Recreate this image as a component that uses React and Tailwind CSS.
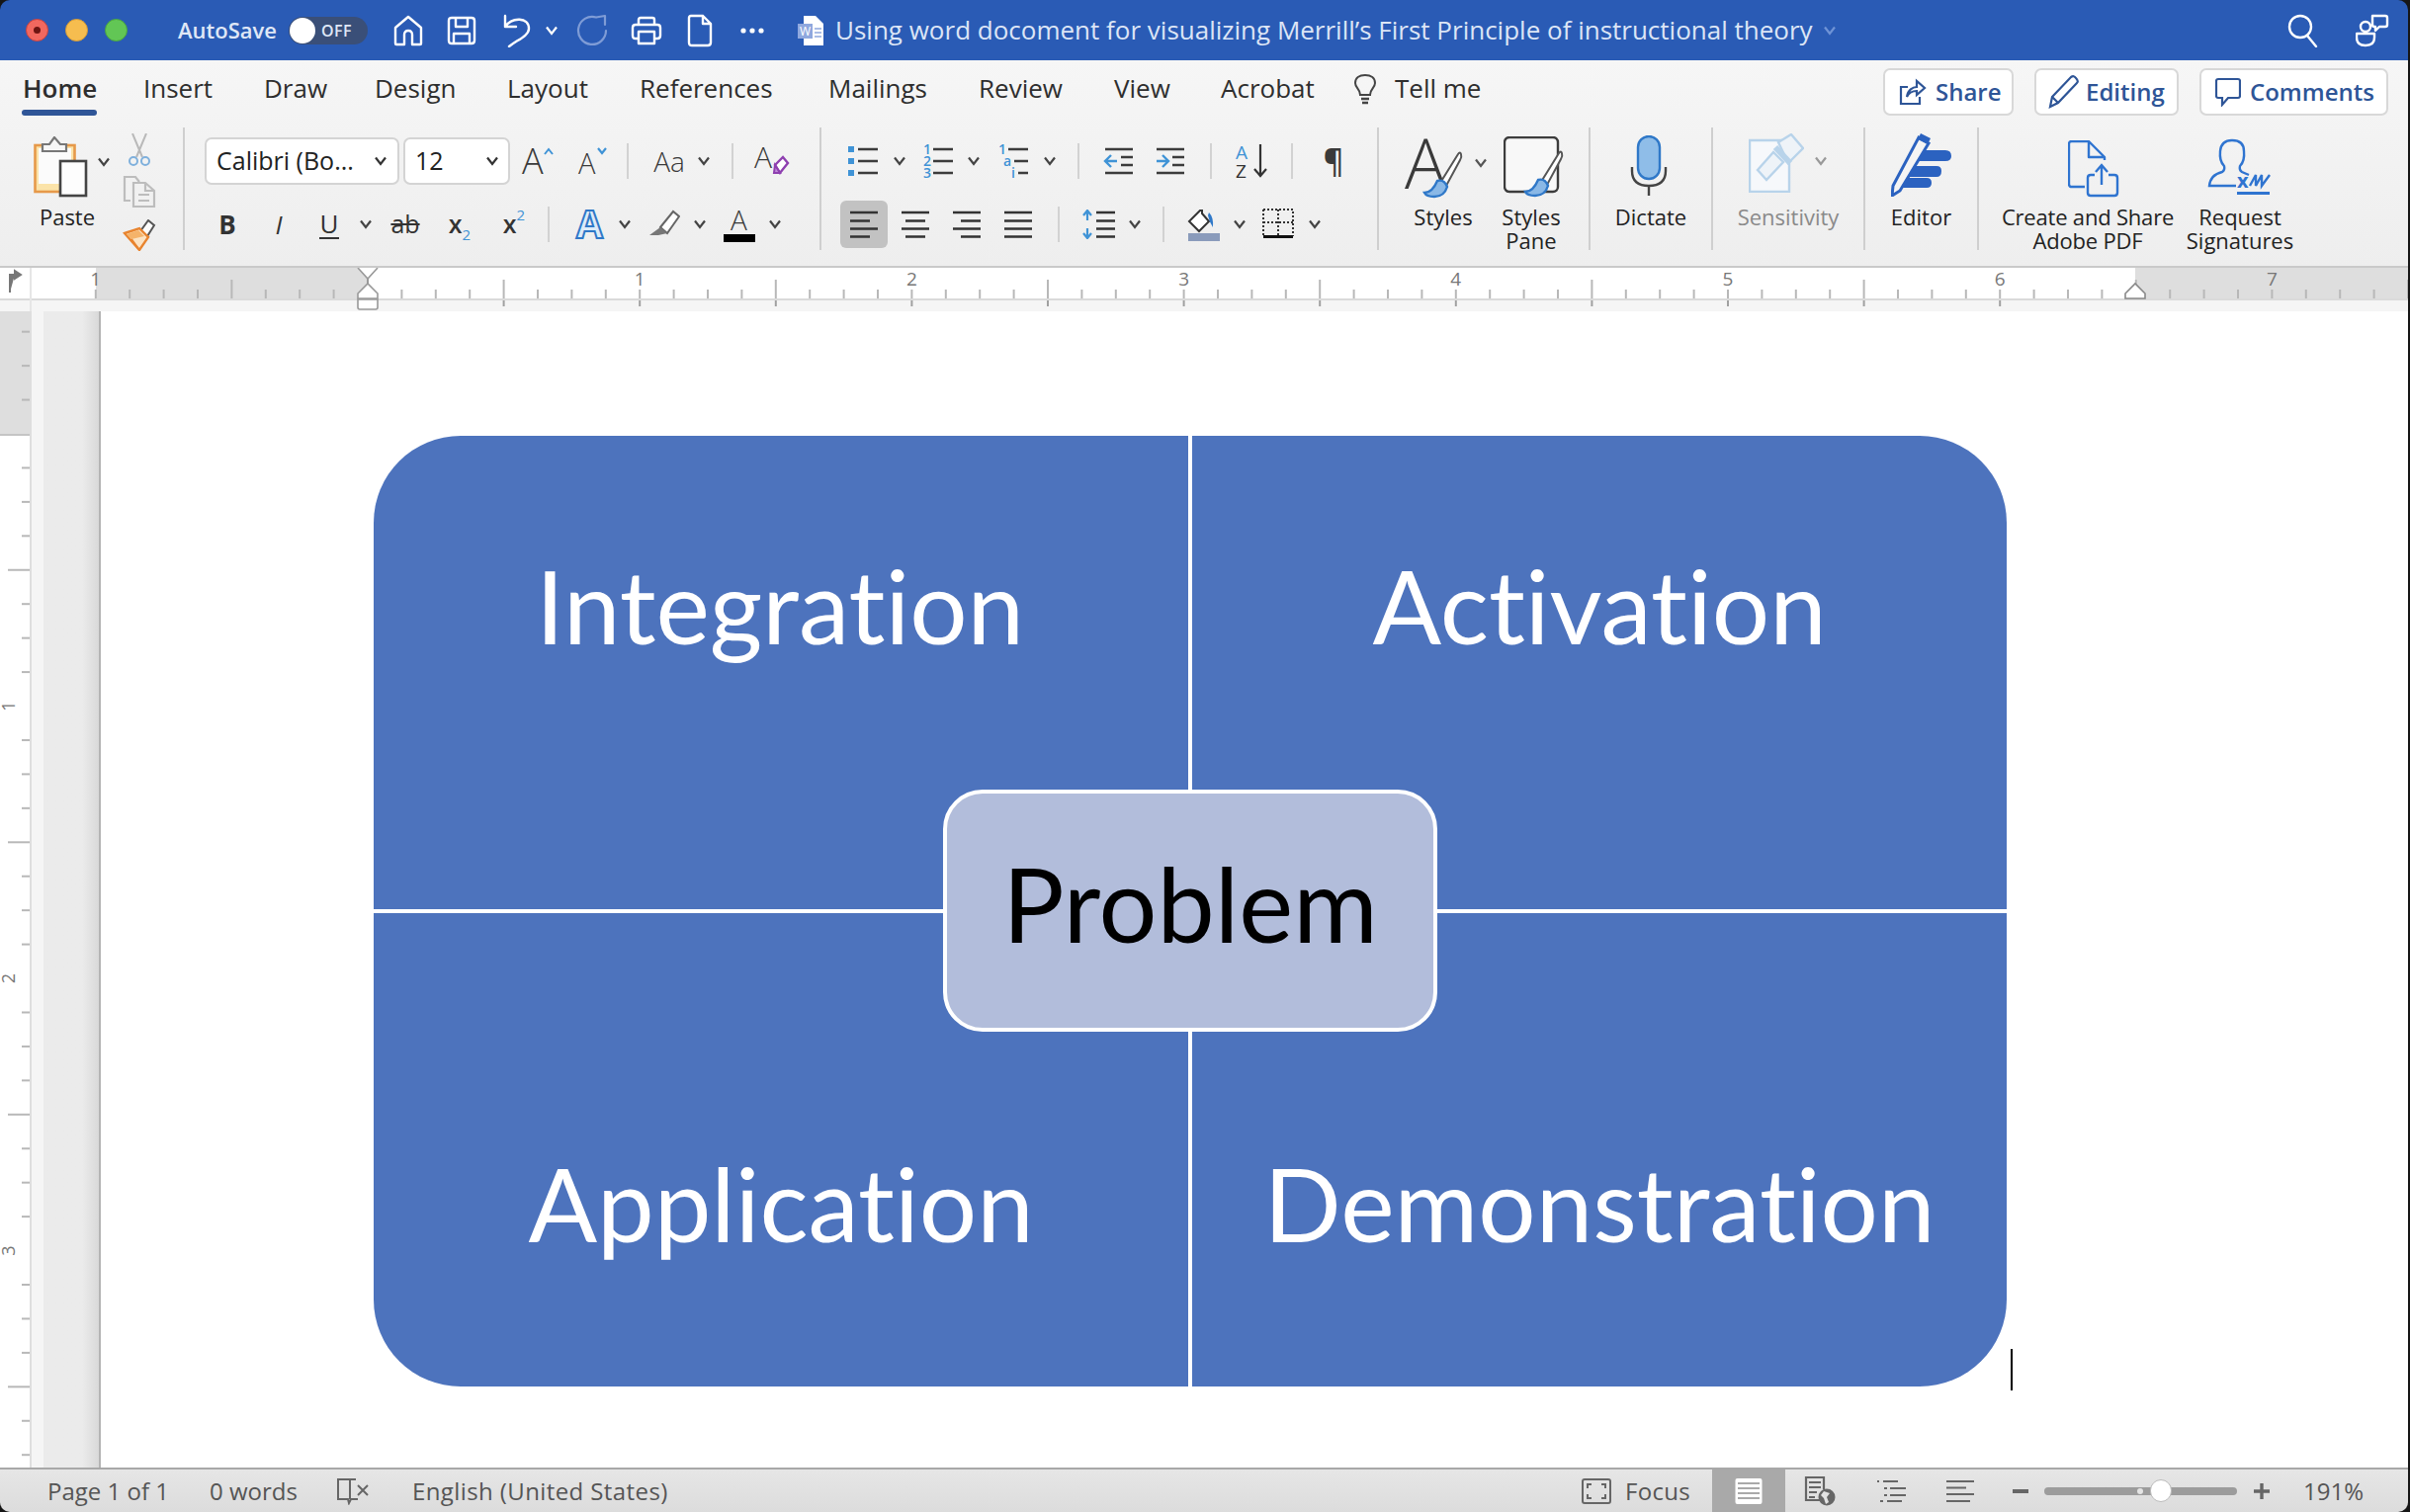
import React from "react";

const W = { fill: "none", stroke: "#fff", strokeWidth: 2.4, strokeLinejoin: "round", strokeLinecap: "round" };
const BLUE = "#3f93d6";
const UI = "'Open Sans','Noto Sans',sans-serif";

function Chev({ c = "#444", cls = "" }) {
  return (
    <svg width="14" height="10" viewBox="0 0 14 10" className={"shrink-0 " + cls}>
      <path d="M2 1.5 L7 8 L12 1.5" fill="none" stroke={c} strokeWidth="2.2" />
    </svg>
  );
}
function Sep({ cls }) {
  return <div className={"w-[2px] h-[36px] bg-[#d2d2d2] shrink-0 " + cls} />;
}
function GSep() {
  return <div className="w-[2px] h-[124px] bg-[#cfcfcf] shrink-0" />;
}
function Slot({ cls, children }) {
  return <div className={"flex items-center justify-center shrink-0 h-[48px] " + cls}>{children}</div>;
}

function Lights() {
  return (
    <div className="flex items-center gap-[17px] ml-[26px] w-[154px]">
      <div className="w-[23px] h-[23px] rounded-full bg-[#f2685f] border border-[#c8423f] flex items-center justify-center">
        <div className="w-[7px] h-[7px] rounded-full bg-[#6e1512]" />
      </div>
      <div className="w-[23px] h-[23px] rounded-full bg-[#f6bd4f] border border-[#d69b35]" />
      <div className="w-[23px] h-[23px] rounded-full bg-[#62c655] border border-[#4aa63e]" />
    </div>
  );
}

function TitleBar() {
  return (
    <div className="h-[61px] bg-[#2a5bb5] flex items-center shrink-0 text-white">
      <Lights />
      <div className="w-[112px] text-[22px] font-semibold text-[#dfe7f6] whitespace-nowrap">AutoSave</div>
      <div className="w-[80px] h-[28px] rounded-full bg-[#3a4f78] flex items-center relative shrink-0">
        <div className="w-[26px] h-[26px] rounded-full bg-white ml-[1px]" />
        <span className="ml-[6px] text-[16px] font-semibold text-[#dfe7f6] tracking-[0.5px]">OFF</span>
      </div>
      <svg width="32" height="32" viewBox="0 0 32 32" className="ml-[25px] shrink-0">
        <path {...W} d="M3 13 L16 2 L29 13 V29 Q29 30 28 30 H20 V20 Q20 16 16 16 Q12 16 12 20 V30 H4 Q3 30 3 29 Z" />
      </svg>
      <svg width="30" height="30" viewBox="0 0 30 30" className="ml-[23px] shrink-0">
        <path {...W} d="M5 2 H25 Q28 2 28 5 V25 Q28 28 25 28 H5 Q2 28 2 25 V5 Q2 2 5 2 Z M9 2 V11 H21 V2 M7 28 V18 H23 V28" />
      </svg>
      <svg width="30" height="34" viewBox="0 0 30 34" className="ml-[26px] shrink-0">
        <path {...W} d="M3 2 V13 H14 M3 13 C10 3 27 3 27 15 C27 22 16 26 7 33" />
      </svg>
      <Chev c="#fff" cls="ml-[13px]" />
      <svg width="34" height="34" viewBox="0 0 34 34" className="ml-[18px] shrink-0">
        <path fill="none" stroke="#7f9cd6" strokeWidth="2.2" strokeLinecap="round" d="M30 17 A14 14 0 1 1 20 3.5 M20 3.5 L29 2 M29 2 V11" />
      </svg>
      <svg width="32" height="30" viewBox="0 0 32 30" className="ml-[21px] shrink-0">
        <path {...W} d="M8 9 V4 Q8 2 10 2 H22 Q24 2 24 4 V9 M7 23 H5 Q2 23 2 20 V12 Q2 9 5 9 H27 Q30 9 30 12 V20 Q30 23 27 23 H25 M8 16 H24 V28 H8 Z" />
      </svg>
      <svg width="26" height="34" viewBox="0 0 26 34" className="ml-[25px] shrink-0">
        <path {...W} d="M4 2 H16 L24 10 V29 Q24 32 21 32 H5 Q2 32 2 29 V4 Q2 2 4 2 Z M16 2 V10 H24" />
      </svg>
      <svg width="24" height="8" viewBox="0 0 24 8" className="ml-[28px] shrink-0">
        <circle cx="3" cy="4" r="2.6" fill="#fff" />
        <circle cx="12" cy="4" r="2.6" fill="#fff" />
        <circle cx="21" cy="4" r="2.6" fill="#fff" />
      </svg>
      <svg width="26" height="30" viewBox="0 0 26 30" className="ml-[34px] shrink-0">
        <path fill="#fff" d="M6 0 H18 L26 8 V30 H6 Z" />
        <rect x="0" y="8" width="15" height="15" fill="#8fa8de" />
        <text x="2" y="20" fontSize="12" fill="#fff" fontFamily={UI}>W</text>
        <path stroke="#8fa8de" strokeWidth="1.5" d="M17 13 H24 M17 17 H24 M17 21 H24" />
      </svg>
      <div className="ml-[12px] mb-[2px] w-[994px] text-[26px] leading-[34px] text-[#dce5f6] whitespace-nowrap">
        Using word docoment for visualizing Merrill’s First Principle of instructional theory
      </div>
      <Chev c="#6f93d6" cls="ml-[5px]" />
      <svg width="32" height="34" viewBox="0 0 32 34" className="ml-[456px] shrink-0">
        <circle cx="13" cy="13" r="11" {...W} />
        <path {...W} d="M20 22 L29 33" />
      </svg>
      <svg width="34" height="34" viewBox="0 0 34 34" className="ml-[37px] shrink-0">
        <circle cx="10" cy="13" r="5" {...W} />
        <path {...W} d="M1 20 H19 V24 Q19 32 10 32 Q1 32 1 24 Z" />
        <path {...W} d="M17 2 H30 Q32 2 32 4 V11 Q32 13 30 13 H24 L20 17 V13 H19 Q17 13 17 11 Z" />
      </svg>
    </div>
  );
}

function Tab({ cls, children }) {
  return <div className={"shrink-0 h-[58px] pt-[10px] leading-[36px] whitespace-nowrap " + cls}>{children}</div>;
}

function ShareBtn({ cls, children }) {
  return (
    <div className={"mt-[8px] h-[48px] rounded-[7px] bg-white border-2 border-[#d8d8d8] flex items-center shrink-0 text-[#2e5597] text-[24px] font-semibold whitespace-nowrap " + cls}>
      {children}
    </div>
  );
}

function TabRow() {
  return (
    <div className="h-[68px] flex shrink-0 text-[26px] text-[#2e2e2e] pl-[23px]">
      <Tab cls="w-[122px] font-semibold">
        <div className="w-[74px]">Home</div>
        <div className="w-[76px] -ml-[1px] mt-[4px] h-[6px] rounded-full bg-[#2f5597]" />
      </Tab>
      <Tab cls="w-[122px]">Insert</Tab>
      <Tab cls="w-[112px]">Draw</Tab>
      <Tab cls="w-[134px]">Design</Tab>
      <Tab cls="w-[134px]">Layout</Tab>
      <Tab cls="w-[191px]">References</Tab>
      <Tab cls="w-[152px]">Mailings</Tab>
      <Tab cls="w-[137px]">Review</Tab>
      <Tab cls="w-[108px]">View</Tab>
      <Tab cls="w-[133px]">Acrobat</Tab>
      <svg width="26" height="32" viewBox="0 0 26 32" className="mt-[13px] shrink-0">
        <path fill="none" stroke="#444" strokeWidth="2" d="M8 22 C8 16 3 15 3 10 C3 5 7 2 13 2 C19 2 23 5 23 10 C23 15 18 16 18 22 Z" />
        <path stroke="#444" strokeWidth="2.4" d="M9 26 H17 M10 30 H16" />
      </svg>
      <Tab cls="ml-[17px] w-[494px]">Tell me</Tab>
      <ShareBtn cls="w-[132px] pl-[14px]">
        <svg width="28" height="28" viewBox="0 0 28 28" className="mr-[9px] shrink-0">
          <path fill="none" stroke="#2e5597" strokeWidth="2.2" d="M9 9 H2 V26 H21 V19 M8 19 C9 12 14 9 18 9 V3 L26 10 L18 17 V13 C14 13 10 15 8 19 Z" />
        </svg>
        Share
      </ShareBtn>
      <ShareBtn cls="ml-[21px] w-[146px] pl-[11px]">
        <svg width="34" height="34" viewBox="0 0 34 34" className="mr-[5px] shrink-0">
          <path fill="none" stroke="#2e5597" strokeWidth="2.2" d="M3 32 L5 22 L24 2 Q27 0 29 3 Q32 6 30 8 L11 28 Z M5 22 L11 28" />
        </svg>
        Editing
      </ShareBtn>
      <ShareBtn cls="ml-[21px] w-[191px] pl-[14px]">
        <svg width="26" height="30" viewBox="0 0 26 30" className="mr-[9px] shrink-0">
          <path fill="none" stroke="#2e5597" strokeWidth="2.2" d="M3 2 H23 Q25 2 25 4 V19 Q25 21 23 21 H13 L7 28 V21 H3 Q1 21 1 19 V4 Q1 2 3 2 Z" />
        </svg>
        Comments
      </ShareBtn>
    </div>
  );
}

function Clipboard() {
  return (
    <div className="flex w-[185px] shrink-0">
      <div className="w-[76px] ml-[30px] pt-[10px] flex flex-col items-center relative">
        <div className="flex items-center h-[68px] self-start ml-[4px]">
          <svg width="56" height="62" viewBox="0 0 56 62" className="mb-[8px] shrink-0">
            <rect x="1.5" y="9" width="40" height="47" fill="#fbe3a9" stroke="#e6994a" strokeWidth="2.6" />
            <rect x="5" y="12" width="33" height="36" fill="#fbfbfb" />
            <path fill="#f7f7f7" stroke="#777" strokeWidth="2.2" d="M9 15 V8 H16 L21 1 L27 8 H33 V15 Z" />
            <rect x="27" y="25" width="26" height="35" fill="#fdfdfd" stroke="#444" strokeWidth="2.6" />
          </svg>
          <Chev c="#444" cls="ml-[8px] mb-[18px]" />
        </div>
        <div className="text-[22px] leading-[24px] text-[#222]">Paste</div>
      </div>
      <div className="ml-[18px] flex flex-col items-center pt-[6px] w-[34px]">
        <svg width="24" height="34" viewBox="0 0 24 34" className="shrink-0">
          <path stroke="#b9b9b9" strokeWidth="2" d="M5 0 L15 24 M19 0 L9 24" />
          <circle cx="6" cy="28" r="4" fill="none" stroke="#7fb0dc" strokeWidth="2" />
          <circle cx="18" cy="28" r="4" fill="none" stroke="#7fb0dc" strokeWidth="2" />
        </svg>
        <svg width="34" height="34" viewBox="0 0 34 34" className="mt-[8px] shrink-0">
          <path fill="none" stroke="#bdbdbd" strokeWidth="2.2" d="M8 26 H2 V2 H13 L17 7 M11 8 H23 L32 16 V32 H11 Z M23 8 V16 H32 M16 20 H27 M16 26 H27" />
        </svg>
        <svg width="34" height="32" viewBox="0 0 34 32" className="mt-[11px] shrink-0">
          <path fill="#fdfdfd" stroke="#555" strokeWidth="2" d="M26 1 L32 6 L25 17 L18 12 Z" />
          <path fill="#fbe3c4" stroke="#e8842f" strokeWidth="2.4" d="M2 14 L17 9 L26 18 L17 31 Z" />
          <path fill="#f5b36a" d="M4 15 L16 11 L22 17 L9 20 Z" />
          <path fill="none" stroke="#e8842f" strokeWidth="2" d="M9 20 L17 31" />
        </svg>
      </div>
    </div>
  );
}

const thin = { fontFamily: UI, fontWeight: 300, fill: "#3a3a3a" };

function FontGroup() {
  return (
    <div className="w-[642px] shrink-0 pt-[10px] flex flex-col gap-[16px]">
      <div className="flex items-center h-[48px]">
        <div className="ml-[20px] w-[197px] h-[48px] bg-white rounded-[7px] border-2 border-[#d4d4d4] flex items-center justify-between pl-[10px] pr-[10px] text-[25px] text-[#222] shrink-0">
          <span className="whitespace-nowrap">Calibri (Bo...</span>
          <Chev c="#333" />
        </div>
        <div className="ml-[4px] w-[108px] h-[48px] bg-white rounded-[7px] border-2 border-[#d4d4d4] flex items-center justify-between pl-[10px] pr-[9px] text-[25px] text-[#222] shrink-0">
          <span>12</span>
          <Chev c="#333" />
        </div>
        <Slot cls="ml-[9px] w-[40px]">
          <svg width="34" height="30" viewBox="0 0 34 30" className="overflow-visible">
            <text x="0" y="28" fontSize="36" {...thin}>A</text>
            <path d="M23 8 L27 3 L31 8" fill="none" stroke={BLUE} strokeWidth="2" />
          </svg>
        </Slot>
        <Slot cls="ml-[15px] w-[40px]">
          <svg width="30" height="30" viewBox="0 0 30 30" className="overflow-visible">
            <text x="0" y="28" fontSize="29" {...thin}>A</text>
            <path d="M20 2 L24 7 L28 2" fill="none" stroke={BLUE} strokeWidth="2.2" />
          </svg>
        </Slot>
        <Sep cls="ml-[14px]" />
        <Slot cls="ml-[21px] w-[40px] text-[28px] font-light text-[#3a3a3a]">Aa</Slot>
        <Chev cls="ml-[8px]" />
        <Sep cls="ml-[21px]" />
        <Slot cls="ml-[18px] w-[40px]">
          <svg width="36" height="36" viewBox="0 0 36 36" className="overflow-visible">
            <text x="1" y="25" fontSize="30" {...thin}>A</text>
            <path d="M22 22 L30 14 L35 20 L27 30 Z" fill="#fff" stroke="#8e3fb0" strokeWidth="2.4" />
            <path d="M22 22 L27 30 L21 30 Z" fill="#c08ad8" stroke="#8e3fb0" strokeWidth="2" />
          </svg>
        </Slot>
      </div>
      <div className="flex items-center h-[48px] text-[#333]">
        <Slot cls="ml-[23px] w-[40px] text-[26px] font-bold">B</Slot>
        <Slot cls="ml-[12px] w-[40px] text-[26px] italic">I</Slot>
        <Slot cls="ml-[11px] w-[40px] text-[26px]">
          <span className="border-b-2 border-[#333] leading-[28px] px-[1px]">U</span>
        </Slot>
        <Chev cls="ml-[10px]" />
        <Slot cls="ml-[13px] w-[40px] text-[25px]">
          <span className="line-through decoration-[2px]">ab</span>
        </Slot>
        <Slot cls="ml-[15px] w-[40px] text-[25px] font-semibold">
          <span>x</span>
          <span className="text-[15px] text-[#3f93d6] font-normal mt-[20px]">2</span>
        </Slot>
        <Slot cls="ml-[15px] w-[40px] text-[25px] font-semibold">
          <span>x</span>
          <span className="text-[15px] text-[#3f93d6] font-normal mb-[20px]">2</span>
        </Slot>
        <Sep cls="ml-[14px]" />
        <Slot cls="ml-[23px] w-[40px]">
          <svg width="34" height="34" viewBox="0 0 34 34" className="overflow-visible">
            <text x="1" y="31" fontSize="39" fontWeight="700" fontFamily={UI} fill="#dcebf8" stroke="#2f78c8" strokeWidth="2">A</text>
          </svg>
        </Slot>
        <Chev cls="ml-[6px]" />
        <Slot cls="ml-[13px] w-[40px]">
          <svg width="32" height="30" viewBox="0 0 32 30">
            <path d="M12 18 L25 2 L31 7 L19 24 Z" fill="#fff" stroke="#666" strokeWidth="2" />
            <path d="M12 18 L19 24 L10 26 L1 26 Z" fill="#777" />
          </svg>
        </Slot>
        <Chev cls="ml-[9px]" />
        <Slot cls="ml-[13px] w-[40px]">
          <svg width="32" height="36" viewBox="0 0 32 36" className="overflow-visible">
            <text x="7" y="24" fontSize="28" {...thin}>A</text>
            <rect x="0" y="28" width="32" height="8" fill="#000" />
          </svg>
        </Slot>
        <Chev cls="ml-[9px]" />
      </div>
    </div>
  );
}

function ListIc({ marks, cls }) {
  return (
    <svg width="32" height="36" viewBox="0 0 32 36" className={"overflow-visible " + cls}>
      {marks === "b" && (
        <g fill="#3f93d6">
          <rect x="1" y="3" width="6" height="6" />
          <rect x="1" y="15" width="6" height="6" />
          <rect x="1" y="27" width="6" height="6" />
        </g>
      )}
      {marks !== "b" &&
        marks.map((m, i) => (
          <text key={i} x="1" y={11 + i * 12} fontSize="14" fill="#3f93d6" fontFamily={UI} fontWeight="600">
            {m}
          </text>
        ))}
      <path stroke="#3c3c3c" strokeWidth="2.4" d="M11 6 H31 M11 18 H31 M11 30 H31" />
    </svg>
  );
}

function Align({ d }) {
  return (
    <svg width="30" height="30" viewBox="0 0 30 30">
      <path stroke="#333" strokeWidth="2.4" d={d} />
    </svg>
  );
}

function ParaGroup() {
  return (
    <div className="w-[562px] shrink-0 pt-[10px] flex flex-col gap-[16px]">
      <div className="flex items-center h-[48px]">
        <ListIc marks="b" cls="ml-[26px] shrink-0" />
        <Chev cls="ml-[14px]" />
        <ListIc marks={["1", "2", "3"]} cls="ml-[16px] shrink-0" />
        <Chev cls="ml-[13px]" />
        <svg width="32" height="36" viewBox="0 0 32 36" className="ml-[17px] shrink-0 overflow-visible">
          <text x="1" y="11" fontSize="14" fill="#3f93d6" fontWeight="600" fontFamily={UI}>1</text>
          <text x="6" y="23" fontSize="14" fill="#3f93d6" fontWeight="600" fontFamily={UI}>a</text>
          <text x="14" y="35" fontSize="14" fill="#3f93d6" fontWeight="600" fontFamily={UI}>i</text>
          <path stroke="#3c3c3c" strokeWidth="2.4" d="M11 6 H31 M17 18 H31 M21 30 H31" />
        </svg>
        <Chev cls="ml-[14px]" />
        <Sep cls="ml-[21px]" />
        <svg width="32" height="36" viewBox="0 0 32 36" className="ml-[24px] shrink-0">
          <path stroke="#3c3c3c" strokeWidth="2.4" d="M2 6 H30 M18 14 H30 M18 22 H30 M2 30 H30" />
          <path fill="none" stroke="#3f93d6" strokeWidth="2.4" d="M14 18 H3 M8 12 L2 18 L8 24" />
        </svg>
        <svg width="32" height="36" viewBox="0 0 32 36" className="ml-[20px] shrink-0">
          <path stroke="#3c3c3c" strokeWidth="2.4" d="M2 6 H30 M18 14 H30 M18 22 H30 M2 30 H30" />
          <path fill="none" stroke="#3f93d6" strokeWidth="2.4" d="M2 18 H13 M8 12 L14 18 L8 24" />
        </svg>
        <Sep cls="ml-[24px]" />
        <svg width="34" height="36" viewBox="0 0 34 36" className="ml-[23px] shrink-0 overflow-visible">
          <text x="1" y="16" fontSize="19" fill="#3f93d6" fontFamily={UI}>A</text>
          <text x="1" y="35" fontSize="19" fill="#333" fontFamily={UI}>Z</text>
          <path fill="none" stroke="#333" strokeWidth="2.2" d="M26 1 V33 M20 26 L26 33 L32 26" />
        </svg>
        <Sep cls="ml-[23px]" />
        <div className="ml-[29px] w-[24px] text-[32px] font-semibold text-[#3a3a3a] leading-[36px] text-center shrink-0">¶</div>
      </div>
      <div className="flex items-center h-[48px]">
        <Slot cls="ml-[19px] w-[48px] bg-[#c2c2c2] rounded-[6px]">
          <Align d="M1 3 H29 M1 11.5 H21 M1 19.5 H29 M1 27.5 H21" />
        </Slot>
        <Slot cls="ml-[12px] w-[32px]">
          <Align d="M1 3 H29 M5 11.5 H25 M1 19.5 H29 M5 27.5 H25" />
        </Slot>
        <Slot cls="ml-[20px] w-[32px]">
          <Align d="M1 3 H29 M9 11.5 H29 M1 19.5 H29 M9 27.5 H29" />
        </Slot>
        <Slot cls="ml-[20px] w-[32px]">
          <Align d="M1 3 H29 M1 11.5 H29 M1 19.5 H29 M1 27.5 H29" />
        </Slot>
        <Sep cls="ml-[24px]" />
        <svg width="34" height="30" viewBox="0 0 34 30" className="ml-[23px] shrink-0">
          <path stroke="#333" strokeWidth="2.4" d="M14 3 H33 M14 11.5 H33 M14 19.5 H33 M14 27.5 H33" />
          <path fill="none" stroke="#3f93d6" strokeWidth="2.2" d="M5 1 V11 M1 6 L5 1 L9 6 M5 19 V29 M1 24 L5 29 L9 24" />
        </svg>
        <Chev cls="ml-[12px]" />
        <Sep cls="ml-[21px]" />
        <svg width="34" height="34" viewBox="0 0 34 34" className="ml-[23px] shrink-0">
          <path d="M13 3 L2 14 L12 24 L22 14 L15 6 V3 Z" fill="#fff" stroke="#333" strokeWidth="2" />
          <path d="M22 5 Q27 10 26 20 Q22 14 21 8 Z" fill="#2f78c8" />
          <rect x="1" y="26" width="32" height="8" fill="#8a9bbb" />
        </svg>
        <Chev cls="ml-[12px]" />
        <svg width="32" height="32" viewBox="0 0 32 32" className="ml-[16px] shrink-0">
          <path fill="none" stroke="#333" strokeWidth="2" strokeDasharray="2 2" d="M1 1 H31 V28 M1 1 V28 M16 1 V28 M1 14 H31" />
          <rect x="1" y="27" width="30" height="3" fill="#111" />
        </svg>
        <Chev cls="ml-[14px]" />
      </div>
    </div>
  );
}

function Brush({ x = 0, y = 0 }) {
  return (
    <g transform={`translate(${x} ${y})`}>
      <path d="M18 32 L36 3 Q38 0 39 3 Q40 6 38 9 L24 35 Z" fill="#fff" stroke="#555" strokeWidth="2" />
      <path d="M15 30 Q22 28 25 36 Q22 46 12 46 Q4 46 2 42 Q10 42 15 30 Z" fill="#8ab8e6" stroke="#2f78c8" strokeWidth="2.4" />
    </g>
  );
}

function BigCol({ cls, label, gray, children }) {
  return (
    <div className={"flex flex-col items-center shrink-0 " + cls}>
      <div className="h-[78px] w-full flex items-center justify-center shrink-0">{children}</div>
      <div className={"text-[22px] leading-[24px] text-center whitespace-nowrap " + (gray ? "text-[#8a8a8a]" : "text-[#222]")}>{label}</div>
    </div>
  );
}

function Ribbon() {
  return (
    <div className="h-[140px] flex shrink-0">
      <Clipboard />
      <GSep />
      <FontGroup />
      <GSep />
      <ParaGroup />
      <GSep />
      <div className="w-[212px] shrink-0 flex pl-[20px]">
        <BigCol cls="w-[90px]" label="Styles">
          <div className="flex items-center ml-[7px] mt-[10px]">
            <svg width="62" height="60" viewBox="0 0 62 60" className="shrink-0 overflow-visible">
              <text x="-2" y="48" fontSize="70" fontFamily={UI} fontWeight="300" fill="#3a3a3a">A</text>
              <Brush x="16" y="10" />
            </svg>
            <Chev c="#555" cls="ml-[6px] mb-[16px]" />
          </div>
        </BigCol>
        <BigCol cls="w-[80px] ml-[4px]" label={<>Styles<br />Pane</>}>
          <svg width="62" height="62" viewBox="0 0 62 62" className="mt-[2px] ml-[6px] shrink-0">
            <rect x="1" y="1" width="54" height="55" rx="5" fill="#f8f8f8" stroke="#3c3c3c" strokeWidth="2.4" />
            <Brush x="20" y="14" />
          </svg>
        </BigCol>
      </div>
      <GSep />
      <div className="w-[122px] shrink-0 flex justify-center">
        <BigCol cls="w-[110px]" label="Dictate">
          <svg width="38" height="62" viewBox="0 0 38 62" className="-ml-[4px] shrink-0">
            <rect x="8" y="1" width="22" height="43" rx="11" fill="#8fbde8" stroke="#2f78c8" strokeWidth="2.4" />
            <path fill="none" stroke="#444" strokeWidth="2.4" d="M2 32 V36 Q2 51 19 51 Q36 51 36 36 V32 M19 51 V61" />
          </svg>
        </BigCol>
      </div>
      <GSep />
      <div className="w-[152px] shrink-0 flex justify-center">
        <BigCol cls="w-[140px]" gray label="Sensitivity">
          <div className="flex items-center mb-[6px]">
            <svg width="56" height="60" viewBox="0 0 56 60" className="shrink-0">
              <path fill="#f6f8fb" stroke="#b8d3ea" strokeWidth="2.4" d="M1 7 H41 V59 H1 Z" />
              <path fill="#eef3f8" stroke="#b8d3ea" strokeWidth="2.4" d="M9 37 L25 19 L35 29 L18 47 Z M30 9 L43 1 L55 15 L40 30 Z" />
              <path stroke="#b8d3ea" strokeWidth="6" d="M27 14 L42 30" />
            </svg>
            <Chev c="#999" cls="ml-[10px] mb-[4px]" />
          </div>
        </BigCol>
      </div>
      <GSep />
      <div className="w-[113px] shrink-0 flex justify-center">
        <BigCol cls="w-[100px]" label="Editor">
          <svg width="62" height="64" viewBox="0 0 62 64" className="mb-[2px] shrink-0">
            <path fill="#2b62c0" d="M26 17 H55 Q61 17 61 23 Q61 28 55 28 H22 Z M19 33 H46 Q51 33 51 38 Q51 44 46 44 H14 Z M12 45 H36 Q41 45 41 50 Q41 55 36 55 H8 Z" />
            <path fill="#f4f4f4" stroke="#2b62c0" strokeWidth="3" d="M2 53 L28 4 L38 10 L9 58 L1 63 Z" />
            <path fill="#2b62c0" d="M30 0 L40 5 L37 11 L27 6 Z" />
          </svg>
        </BigCol>
      </div>
      <GSep />
      <div className="flex ml-[20px]">
        <BigCol cls="w-[180px] tracking-[-0.2px]" label={<>Create and Share<br />Adobe PDF</>}>
          <svg width="52" height="58" viewBox="0 0 52 58" className="mt-[6px] ml-[12px] shrink-0">
            <path fill="none" stroke="#2f74d0" strokeWidth="2.4" strokeLinejoin="round" d="M17 47 H4 Q1 47 1 44 V4 Q1 1 4 1 H21 L37 17 V20 M21 1 V17 H37" />
            <path fill="none" stroke="#2f74d0" strokeWidth="2.4" d="M27 35 H23 Q20 35 20 38 V53 Q20 56 23 56 H47 Q50 56 50 53 V38 Q50 35 47 35 H41 M34 45 V26 M28 32 L34 25 L40 32" />
          </svg>
        </BigCol>
        <BigCol cls="w-[120px] ml-[4px]" label={<>Request<br />Signatures</>}>
          <svg width="64" height="58" viewBox="0 0 64 58" className="mt-[3px] shrink-0 overflow-visible">
            <path fill="none" stroke="#2f74d0" strokeWidth="2.4" d="M28 47 H1 Q2 36 14 33 Q17 31 16 27 Q11 22 12 12 Q13 1 24 1 Q36 1 36 12 Q37 22 32 27 Q31 31 34 33 L41 36" />
            <text x="29" y="49" fontSize="20" fontWeight="700" fill="#2f74d0" fontFamily={UI}>x</text>
            <path fill="none" stroke="#2f74d0" strokeWidth="2.4" d="M42 47 L48 36 V47 L54 36 V47 L62 36" />
            <rect x="29" y="53" width="33" height="3" fill="#2f74d0" />
          </svg>
        </BigCol>
      </div>
    </div>
  );
}

function HRuler() {
  const X0 = 372;
  const step = 275.2 / 8;
  const ticks = [];
  for (let k = -8; k <= 60; k++) {
    const x = X0 + k * step;
    if (x > 2436) break;
    if (k === 0) continue;
    const long = ((k % 8) + 8) % 8 === 4;
    const inch = ((k % 8) + 8) % 8 === 0;
    ticks.push(<line key={"t" + k} x1={x} x2={x} y1={long ? 12 : 22} y2={31} stroke="#b8b8b8" strokeWidth="2" />);
    if ((long || inch) && k > 0 && x < 2150) {
      ticks.push(<line key={"l" + k} x1={x} x2={x} y1="33" y2="39" stroke="#a0a0a0" strokeWidth="2" />);
    }
    if (inch) {
      const n = Math.abs(k / 8);
      ticks.push(
        <text key={"n" + k} x={x} y="18" fontSize="19" textAnchor="middle" fill="#777" fontFamily={UI}>
          {n}
        </text>
      );
    }
  }
  return (
    <svg width="2438" height="44" viewBox="0 0 2438 44" className="block shrink-0">
      <rect width="2438" height="44" fill="#f5f5f5" />
      <rect width="2438" height="31" fill="#fff" />
      <rect x="97" width="275" height="31" fill="#dedede" />
      <rect x="2160" width="276" height="31" fill="#dedede" />
      <rect y="31" width="2438" height="2" fill="#dadada" />
      <rect x="30" width="2" height="44" fill="#e6e6e6" />
      {ticks}
      <path d="M10 25 V7 H15 M15 3 L21 7 L15 11 Z" fill="#777" stroke="#777" strokeWidth="2" />
      <path d="M362 0 L372 11 L382 0" fill="#fff" stroke="#999" strokeWidth="1.6" />
      <rect x="371" y="10" width="2" height="8" fill="#999" />
      <path d="M362 31 V26 L372 16 L382 26 V31 Z" fill="#fff" stroke="#999" strokeWidth="1.6" />
      <path d="M362 32 H382 V40 Q382 42 380 42 H364 Q362 42 362 40 Z" fill="#fff" stroke="#999" strokeWidth="1.6" />
      <path d="M2150 31 V26 L2160 16 L2170 26 V31 Z" fill="#fff" stroke="#888" strokeWidth="1.6" />
    </svg>
  );
}

function VRuler() {
  const Y0 = 124;
  const step = 34.44;
  const t = [];
  for (let k = -3; k <= 30; k++) {
    if (k === 0) continue;
    const y = Y0 + k * step;
    const inch = k % 8 === 0;
    const long = ((k % 8) + 8) % 8 === 4;
    if (inch) {
      t.push(
        <text key={k} x="0" y="0" fontSize="18" textAnchor="middle" fill="#777" fontFamily={UI} transform={`translate(15 ${y}) rotate(-90)`}>
          {k / 8}
        </text>
      );
    } else {
      t.push(<line key={k} x1={long ? 8 : 22} x2="30" y1={y} y2={y} stroke="#b8b8b8" strokeWidth="2" />);
    }
  }
  return (
    <svg width="32" height="1170" viewBox="0 0 32 1170" className="block shrink-0">
      <rect width="32" height="1170" fill="#fff" />
      <rect width="30" height="124" fill="#dedede" />
      <rect y="124" width="30" height="2" fill="#c4c4c4" />
      <rect x="30" width="2" height="1170" fill="#dedede" />
      {t}
    </svg>
  );
}

function Quad({ pt, children }) {
  return <div className={"bg-[#4d73bd] text-center text-white text-[103px] leading-[100px] whitespace-nowrap " + pt}>{children}</div>;
}

function Doc() {
  return (
    <div className="flex flex-1 min-h-0">
      <VRuler />
      <div className="w-[12px] bg-[#f5f5f5] shrink-0" />
      <div className="w-[58px] shrink-0 bg-gradient-to-r from-[#ebebeb] from-70% to-[#d9d9d9] border-r-2 border-[#b4b4b4]" />
      <div className="flex-1 bg-white flex items-start pl-[276px] pt-[126px]">
        <div className="relative w-[1652px] h-[962px] shrink-0 font-['Lato'] [font-variant-ligatures:none]">
          <div className="w-full h-full grid grid-cols-2 grid-rows-2 gap-[4px] bg-white rounded-[88px] overflow-hidden">
            <Quad pt="pt-[121px] pr-[2px]">Integration</Quad>
            <Quad pt="pt-[121px]">Activation</Quad>
            <Quad pt="pt-[243px]">Application</Quad>
            <Quad pt="pt-[243px]">Demonstration</Quad>
          </div>
          <div className="absolute left-[576px] top-[358px] w-[500px] h-[245px] bg-[#b2bddb] border-4 border-white rounded-[40px] flex items-center justify-center text-black text-[104px] leading-[100px]">
            <span className="-mt-[16px]">Problem</span>
          </div>
        </div>
        <div className="ml-[4px] mt-[924px] w-[2px] h-[42px] bg-black shrink-0" />
      </div>
    </div>
  );
}

function Status() {
  return (
    <div className="h-[45px] shrink-0 border-t-2 border-[#a8a8a8] bg-gradient-to-b from-[#e6e6e6] to-[#dcdcdc] flex items-center justify-between text-[#555] text-[24px]">
      <div className="flex items-center">
        <div className="ml-[48px] w-[164px] whitespace-nowrap">Page 1 of 1</div>
        <div className="w-[128px] whitespace-nowrap">0 words</div>
        <svg width="34" height="28" viewBox="0 0 34 28" className="shrink-0">
          <path fill="none" stroke="#666" strokeWidth="2" d="M14 2 H2 V22 H12 L13 26 L15 22 H22 M14 2 V22 M14 2 H20" />
          <path stroke="#666" strokeWidth="2" d="M22 8 L32 18 M32 8 L22 18" />
        </svg>
        <div className="ml-[43px] whitespace-nowrap tracking-[0.4px]">English (United States)</div>
      </div>
      <div className="flex items-center h-full w-[836px] shrink-0">
        <svg width="30" height="30" viewBox="0 0 30 30" className="shrink-0">
          <rect x="1" y="3" width="28" height="24" rx="2" fill="none" stroke="#666" strokeWidth="2" />
          <path fill="none" stroke="#666" strokeWidth="2" d="M6 12 V8 H10 M20 8 H24 V12 M24 18 V22 H20 M10 22 H6 V18" />
        </svg>
        <div className="ml-[14px] w-[67px] whitespace-nowrap tracking-[0.3px]">Focus</div>
        <div className="ml-[21px] w-[74px] h-full bg-[#a9a9a9] flex items-center justify-center shrink-0">
          <svg width="28" height="28" viewBox="0 0 28 28">
            <rect x="0.5" y="1" width="27" height="26" rx="2" fill="#fff" />
            <path stroke="#a9a9a9" strokeWidth="2" d="M3 6 H25 M3 11 H25 M3 16 H25 M3 21 H25" />
          </svg>
        </div>
        <svg width="32" height="30" viewBox="0 0 32 30" className="ml-[19px] shrink-0">
          <path fill="none" stroke="#666" strokeWidth="2.2" d="M17 24 H2 V1 H20 V13" />
          <path stroke="#666" strokeWidth="2.2" d="M5 6 H17 M5 11 H17 M5 16 H13 M5 21 H11" />
          <circle cx="23" cy="21" r="8.5" fill="#666" />
          <path fill="#e2e2e2" d="M20 15 L26 17 L23 21 L25 26 L22 28 L20 22 L17 19 Z" />
        </svg>
        <svg width="30" height="24" viewBox="0 0 30 24" className="ml-[41px] shrink-0">
          <path stroke="#666" strokeWidth="2.2" d="M1 2 H3 M7 2 H22 M8 9 H11 M14 9 H30 M8 16 H11 M14 16 H30 M4 22 H7 M11 22 H26" />
        </svg>
        <svg width="28" height="24" viewBox="0 0 28 24" className="ml-[41px] shrink-0">
          <path stroke="#666" strokeWidth="2.2" d="M0 2 H28 M0 8.5 H20 M0 15 H28 M0 22 H24" />
        </svg>
        <div className="ml-[39px] w-[16px] h-[4px] bg-[#666] shrink-0" />
        <div className="ml-[16px] w-[195px] h-[8px] rounded-full bg-[#9c9c9c] relative shrink-0">
          <div className="absolute left-[94px] top-[1px] w-[6px] h-[6px] rounded-full bg-[#e5e5e5]" />
          <div className="absolute left-[107px] -top-[8px] w-[22px] h-[23px] rounded-full bg-white border border-[#bbb]" />
        </div>
        <svg width="16" height="16" viewBox="0 0 16 16" className="ml-[17px] shrink-0">
          <path stroke="#666" strokeWidth="3.4" d="M8 0 V16 M0 8 H16" />
        </svg>
        <div className="ml-[34px] whitespace-nowrap">191%</div>
      </div>
    </div>
  );
}

export default function App() {
  return (
    <div className="w-[2438px] h-[1530px] bg-[#161616] overflow-hidden">
      <div className="w-[2436px] h-[1530px] rounded-[10px] overflow-hidden flex flex-col font-['Open_Sans','Noto_Sans',sans-serif]">
        <TitleBar />
        <div className="bg-gradient-to-b from-[#f6f6f6] to-[#eeeeee] shrink-0 border-b-2 border-[#c9c9c9]">
          <TabRow />
          <Ribbon />
        </div>
        <HRuler />
        <Doc />
        <Status />
      </div>
    </div>
  );
}
